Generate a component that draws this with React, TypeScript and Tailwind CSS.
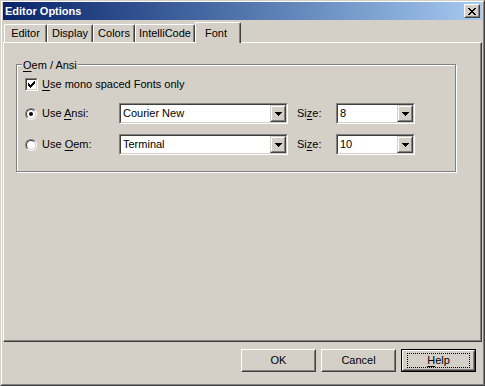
import type { ReactNode } from 'react';

const tabs = [
  { label: 'Editor', w: 'w-[43px]' },
  { label: 'Display', w: 'w-[46px]' },
  { label: 'Colors', w: 'w-[42px]' },
  { label: 'IntelliCode', w: 'w-[60px]' },
];

// Underlined access key, Win32 style
const Key = ({ children }: { children: ReactNode }) => <span className="underline underline-offset-2">{children}</span>;

const DropArrow = () => (
  <svg width="7" height="4" viewBox="0 0 7 4">
    <path d="M0 0h7v1H0zM1 1h5v1H1zM2 2h3v1H2zM3 3h1v1H3z" fill="#000" />
  </svg>
);

const Combo = ({ value, w }: { value: string; w: string }) => (
  <div className={`${w} h-[21px] border border-t-[#808080] border-l-[#808080] border-r-white border-b-white`}>
    <div className="h-full border border-t-[#404040] border-l-[#404040] border-r-[#d4d0c8] border-b-[#d4d0c8] bg-white flex items-center">
      <span className="flex-1 pl-[2px] leading-none">{value}</span>
      <div className="w-[16px] h-[17px] bg-[#d4d0c8] border border-t-[#d4d0c8] border-l-[#d4d0c8] border-r-[#404040] border-b-[#404040]">
        <div className="h-full border border-t-white border-l-white border-r-[#808080] border-b-[#808080] flex items-center justify-center">
          <DropArrow />
        </div>
      </div>
    </div>
  </div>
);

const Radio = ({ checked }: { checked?: boolean }) => (
  <div className="w-[12px] h-[12px] rounded-full border border-t-[#808080] border-l-[#808080] border-r-white border-b-white">
    <div className="h-full rounded-full border border-t-[#404040] border-l-[#404040] border-r-[#d4d0c8] border-b-[#d4d0c8] bg-white flex items-center justify-center">
      {checked && <div className="w-[4px] h-[4px] rounded-full bg-black" />}
    </div>
  </div>
);

const Button = ({ children, isDefault }: { children: ReactNode; isDefault?: boolean }) => (
  <div className={`w-[75px] h-[23px] ${isDefault ? 'border border-black' : ''}`}>
    <div className="h-full border border-t-white border-l-white border-r-[#404040] border-b-[#404040]">
      <div className="h-full border border-t-[#d4d0c8] border-l-[#d4d0c8] border-r-[#808080] border-b-[#808080] flex items-center justify-center">
        {isDefault ? (
          <span className="w-[63px] h-[15px] border border-dotted border-black flex items-center justify-center">{children}</span>
        ) : (
          children
        )}
      </div>
    </div>
  </div>
);

export default function App() {
  return (
    <div className="w-[485px] h-[386px] bg-[#d4d0c8] text-black text-[11px] font-['Liberation_Sans',Arial,sans-serif] border border-t-[#d4d0c8] border-l-[#d4d0c8] border-r-[#404040] border-b-[#404040]">
      <div className="h-full flex flex-col border border-t-white border-l-white border-r-[#808080] border-b-[#808080] px-px pb-px">
        {/* Title bar */}
        <div className="h-[18px] flex items-center bg-gradient-to-r from-[#0a246a] to-[#a6caf0]">
          <span className="flex-1 pl-[2px] text-white font-bold text-[11px]">Editor Options</span>
          <div className="mr-[2px] w-[16px] h-[14px] bg-[#d4d0c8] border border-t-white border-l-white border-r-[#404040] border-b-[#404040]">
            <div className="h-full border border-t-[#d4d0c8] border-l-[#d4d0c8] border-r-[#808080] border-b-[#808080] flex items-center justify-center">
              <svg width="8" height="7" viewBox="0 0 8 7">
                <path d="M0 0h2v1H0zM6 0h2v1H6zM1 1h2v1H1zM5 1h2v1H5zM2 2h4v1H2zM3 3h2v1H3zM2 4h4v1H2zM1 5h2v1H1zM5 5h2v1H5zM0 6h2v1H0zM6 6h2v1H6z" fill="#000" />
              </svg>
            </div>
          </div>
        </div>

        {/* Tabs */}
        <div className="mt-[2px] h-[20px] flex items-end pl-px">
          {tabs.map((t) => (
            <div
              key={t.label}
              className={`${t.w} h-[18px] border-t border-l border-white border-r border-r-[#404040] rounded-t-[2px] shadow-[inset_-1px_0_0_#808080] flex items-center justify-center`}
            >
              {t.label}
            </div>
          ))}
          <div className="relative z-10 -mb-px w-[46px] h-[21px] bg-[#d4d0c8] border-t border-l border-white border-r border-r-[#404040] rounded-t-[2px] shadow-[inset_-1px_0_0_#808080] flex items-start justify-center pt-[2px] pr-[4px]">
            Font
          </div>
        </div>

        {/* Tab page */}
        <div className="h-[300px] border border-t-white border-l-white border-r-[#404040] border-b-[#404040] shadow-[inset_-1px_-1px_0_#808080] pl-[12px] pt-[21px]">
          <div className="relative w-[440px] h-[108px] border border-[#808080] shadow-[inset_1px_1px_0_white,1px_1px_0_white] pl-[8px] pt-[13px] flex flex-col">
            <span className="absolute left-[5px] -top-[8px] px-[1px] bg-[#d4d0c8]">
              <Key>O</Key>em / Ansi
            </span>

            <div className="h-[13px] flex items-center gap-[4px]">
              <div className="w-[13px] h-[13px] border border-t-[#808080] border-l-[#808080] border-r-white border-b-white">
                <div className="h-full border border-t-[#404040] border-l-[#404040] border-r-[#d4d0c8] border-b-[#d4d0c8] bg-white flex items-center justify-center">
                  <svg width="7" height="7" viewBox="0 0 7 7">
                    <path d="M6 0h1v3H6zM5 1h1v3H5zM4 2h1v3H4zM3 3h1v3H3zM2 4h1v3H2zM1 3h1v3H1zM0 2h1v3H0z" fill="#000" />
                  </svg>
                </div>
              </div>
              <span>
                <Key>U</Key>se mono spaced Fonts only
              </span>
            </div>

            <div className="mt-[12px] h-[21px] flex items-center">
              <div className="w-[13px] flex"><Radio checked /></div>
              <span className="w-[81px] pl-[4px]">
                Use <Key>A</Key>nsi:
              </span>
              <Combo value="Courier New" w="w-[169px]" />
              <span className="w-[48px] pl-[9px]">
                Si<Key>z</Key>e:
              </span>
              <Combo value="8" w="w-[79px]" />
            </div>

            <div className="mt-[10px] h-[21px] flex items-center">
              <div className="w-[13px] flex"><Radio /></div>
              <span className="w-[81px] pl-[4px]">
                Use <Key>O</Key>em:
              </span>
              <Combo value="Terminal" w="w-[169px]" />
              <span className="w-[48px] pl-[9px]">
                Si<Key>z</Key>e:
              </span>
              <Combo value="10" w="w-[79px]" />
            </div>
          </div>
        </div>

        {/* Dialog buttons */}
        <div className="flex-1 flex justify-end items-start gap-[5px] pt-[7px] pr-[6px]">
          <Button>OK</Button>
          <Button>Cancel</Button>
          <Button isDefault>
            <Key>H</Key>elp
          </Button>
        </div>
      </div>
    </div>
  );
}
